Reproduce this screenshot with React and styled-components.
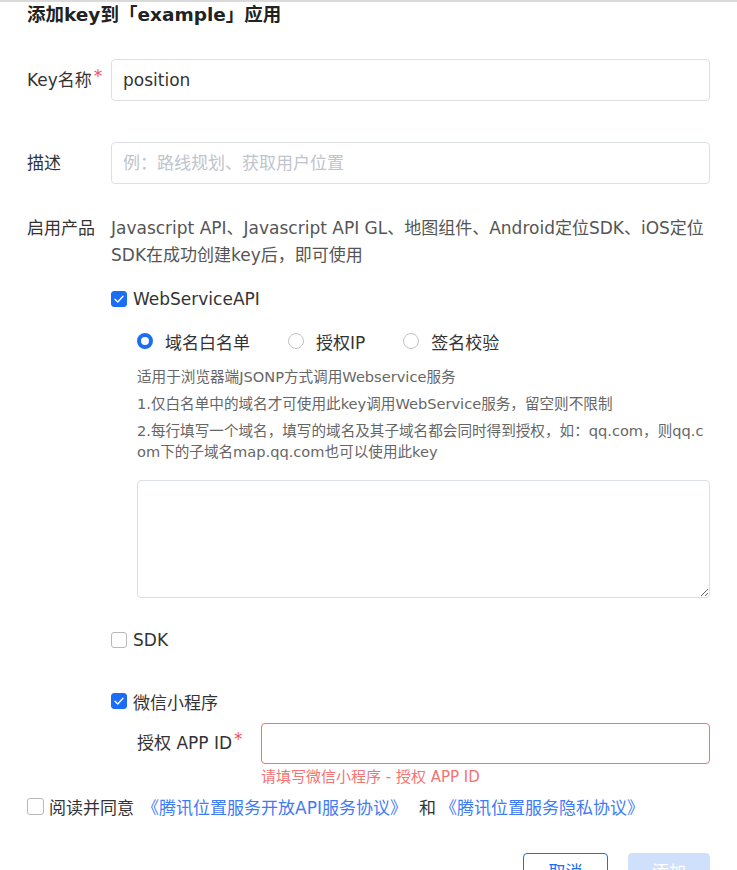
import React, { useState } from "react";
import styled, { createGlobalStyle } from "styled-components";

const GlobalStyle = createGlobalStyle`
  body {
    margin: 0;
    background: #ffffff;
    font-family: "DejaVu Sans", "Noto Sans CJK SC", sans-serif;
    color: #333333;
  }
`;

const colors = {
  text: "#333333",
  sub: "#555555",
  hint: "#666666",
  border: "#dcdfe6",
  blue: "#1b6ef3",
  link: "#3f7bf6",
  red: "#f2554f",
  redSoft: "#f47373",
};

const Page = styled.div`
  width: 737px;
  height: 870px;
  overflow: hidden;
  border-top: 2px solid #dadada;
  box-sizing: border-box;
  padding: 0 27px;
`;

const Title = styled.h2`
  margin: 0;
  padding-top: 1px;
  font-size: 18.5px;
  line-height: 24px;
  font-weight: 700;
  color: #222222;
`;

const Row = styled.div`
  display: grid;
  grid-template-columns: ${(p) => p.labelW || 84}px 1fr;
  align-items: ${(p) => (p.top ? "start" : "center")};
  margin-top: ${(p) => p.mt || 0}px;
`;

const Label = styled.div`
  font-size: 17px;
  line-height: 27px;
  color: ${colors.text};
  white-space: nowrap;
`;

const Star = styled.span`
  color: ${colors.red};
  margin-left: 2px;
  font-size: 17px;
  position: relative;
  top: -4px;
`;

const Input = styled.input`
  box-sizing: border-box;
  width: 100%;
  height: ${(p) => p.h || 42}px;
  border: 1px solid ${(p) => (p.error ? colors.redSoft : colors.border)};
  border-radius: 4px;
  padding: 0 11px;
  font-family: inherit;
  font-size: 17px;
  color: ${colors.text};
  outline: none;

  &::placeholder {
    color: #c0c4cc;
  }
`;

const ProductText = styled.div`
  font-size: 17px;
  line-height: 27px;
  color: ${colors.sub};
`;

const Block = styled.div`
  margin-left: ${(p) => p.ml || 0}px;
  margin-top: ${(p) => p.mt || 0}px;
`;

const CheckRow = styled.label`
  display: flex;
  align-items: center;
  gap: ${(p) => p.gap || 6}px;
  height: 24px;
  font-size: 17px;
  color: ${colors.text};
  cursor: pointer;
`;

const Box = styled.span`
  box-sizing: border-box;
  width: ${(p) => p.size || 16}px;
  height: ${(p) => p.size || 16}px;
  border-radius: 3px;
  border: 1px solid ${(p) => (p.checked ? colors.blue : "#b9b9b9")};
  background: ${(p) => (p.checked ? colors.blue : "#ffffff")};
  display: inline-flex;
  align-items: center;
  justify-content: center;
  flex-shrink: 0;
`;

const RadioGroup = styled.div`
  display: flex;
  align-items: center;
  gap: 38px;
  height: 24px;
`;

const RadioItem = styled.label`
  display: flex;
  align-items: center;
  gap: 12px;
  font-size: 17px;
  color: ${colors.text};
  cursor: pointer;
`;

const RadioDot = styled.span`
  box-sizing: border-box;
  width: 16px;
  height: 16px;
  border-radius: 50%;
  border: ${(p) => (p.checked ? `4px solid ${colors.blue}` : "1px solid #c4c4c4")};
  background: #ffffff;
`;

const Hint = styled.p`
  margin: 0 0 6px;
  font-size: 14.6px;
  line-height: 21px;
  color: ${colors.hint};
  word-break: break-all;
`;

const TextArea = styled.textarea`
  display: block;
  box-sizing: border-box;
  width: 100%;
  height: 118px;
  border: 1px solid ${colors.border};
  border-radius: 4px;
  font-family: inherit;
  font-size: 15px;
  outline: none;
`;

const ErrorText = styled.div`
  font-size: 15px;
  line-height: 20px;
  color: ${colors.redSoft};
  margin-top: 3px;
`;

const Agreement = styled.div`
  display: flex;
  align-items: center;
  height: 24px;
  margin-top: 7px;
  font-size: 17px;
  color: ${colors.text};
  white-space: nowrap;
`;

const Link = styled.a`
  color: ${colors.link};
  text-decoration: none;
  cursor: pointer;
  margin: ${(p) => p.m || "0"};
`;

const Conj = styled.span`
  margin: 0 4px 0 12px;
`;

const Footer = styled.div`
  display: flex;
  justify-content: flex-end;
  gap: 20px;
  margin-top: 35px;
`;

const Button = styled.button`
  box-sizing: border-box;
  height: 34px;
  width: ${(p) => p.w}px;
  border-radius: 4px;
  font-family: inherit;
  font-size: 17px;
  border: 1px solid ${(p) => (p.primary ? "#cfe0fd" : colors.blue)};
  background: ${(p) => (p.primary ? "#cfe0fd" : "#ffffff")};
  color: ${(p) => (p.primary ? "#ffffff" : colors.blue)};
`;

const Tick = () => (
  <svg width="10" height="8" viewBox="0 0 10 8" fill="none">
    <path d="M1 4.2 3.8 7 9 1.2" stroke="#ffffff" strokeWidth="1.3" strokeLinecap="round" strokeLinejoin="round" />
  </svg>
);

const Check = ({ checked, size, gap, children, onClick }) => (
  <CheckRow gap={gap} onClick={onClick}>
    <Box checked={checked} size={size}>{checked && <Tick />}</Box>
    {children}
  </CheckRow>
);

const RADIOS = ["域名白名单", "授权IP", "签名校验"];

const App = () => {
  const [mode, setMode] = useState("域名白名单");
  const [ws, setWs] = useState(true);
  const [sdk, setSdk] = useState(false);
  const [mini, setMini] = useState(true);
  const [agree, setAgree] = useState(false);

  return (
    <Page>
      <GlobalStyle />
      <Title>添加key到「example」应用</Title>

      <Row mt={32}>
        <Label>Key名称<Star>*</Star></Label>
        <Input defaultValue="position" />
      </Row>

      <Row mt={41}>
        <Label>描述</Label>
        <Input placeholder="例：路线规划、获取用户位置" />
      </Row>

      <Row mt={31} top>
        <Label>启用产品</Label>
        <ProductText>
          Javascript API、Javascript API GL、地图组件、Android定位SDK、iOS定位SDK在成功创建key后，即可使用
        </ProductText>
      </Row>

      <Block ml={84} mt={18}>
        <Check checked={ws} onClick={() => setWs(!ws)}>WebServiceAPI</Check>

        <Block ml={26} mt={18}>
          <RadioGroup>
            {RADIOS.map((r) => (
              <RadioItem key={r} onClick={() => setMode(r)}>
                <RadioDot checked={mode === r} />
                {r}
              </RadioItem>
            ))}
          </RadioGroup>

          <Block mt={13}>
            <Hint>适用于浏览器端JSONP方式调用Webservice服务</Hint>
            <Hint>1.仅白名单中的域名才可使用此key调用WebService服务，留空则不限制</Hint>
            <Hint>2.每行填写一个域名，填写的域名及其子域名都会同时得到授权，如：qq.com，则qq.com下的子域名map.qq.com也可以使用此key</Hint>
          </Block>

          <Block mt={18}>
            <TextArea />
          </Block>
        </Block>

        <Block mt={30}>
          <Check checked={sdk} onClick={() => setSdk(!sdk)}>SDK</Check>
        </Block>

        <Block mt={37}>
          <Check checked={mini} onClick={() => setMini(!mini)}>微信小程序</Check>
        </Block>

        <Block ml={26} mt={10}>
          <Row labelW={124}>
            <Label>授权 APP ID<Star>*</Star></Label>
            <Input h={41} error />
          </Row>
          <Block ml={124}>
            <ErrorText>请填写微信小程序 - 授权 APP ID</ErrorText>
          </Block>
        </Block>
      </Block>

      <Agreement>
        <Check checked={agree} size={17} gap={5} onClick={() => setAgree(!agree)}>阅读并同意</Check>
        <Link m="0 0 0 8px">《腾讯位置服务开放API服务协议》</Link>
        <Conj>和</Conj>
        <Link>《腾讯位置服务隐私协议》</Link>
      </Agreement>

      <Footer>
        <Button w={85}>取消</Button>
        <Button w={82} primary>添加</Button>
      </Footer>
    </Page>
  );
};

export default App;
